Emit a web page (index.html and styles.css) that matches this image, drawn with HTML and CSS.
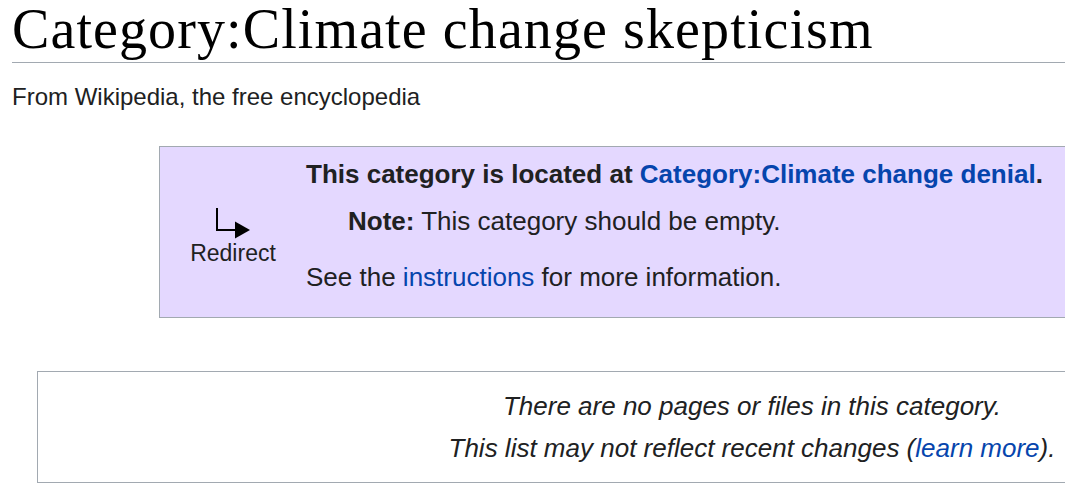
FILE: index.html
```html
<!DOCTYPE html>
<html lang="en">
<head>
<meta charset="utf-8">
<title>Category:Climate change skepticism</title>
<link rel="stylesheet" href="styles.css">
</head>
<body>
<div class="page">
  <h1 class="title">Category:Climate change skepticism</h1>
  <div class="site-sub">From Wikipedia, the free encyclopedia</div>
  <div class="cmbox">
    <div class="cmbox-image">
      <svg class="redirect-arrow" width="36" height="32" viewBox="0 0 36 32">
        <path d="M2 0 V22 H22" fill="none" stroke="#000" stroke-width="2"/>
        <path d="M20 13.5 L35 22 L20 30.5 Z" fill="#000"/>
      </svg>
      <div class="redirect-label">Redirect</div>
    </div>
    <div class="cmbox-text">
      <div class="line-main"><b>This category is located at <a href="#">Category:Climate change denial</a>.</b></div>
      <div class="line-note"><b>Note:</b> This category should be empty.</div>
      <div class="line-see">See the <a href="#">instructions</a> for more information.</div>
    </div>
  </div>
  <div class="catbox">
    <p class="empty-line">There are no pages or files in this category.</p>
    <p class="empty-line">This list may not reflect recent changes (<a href="#">learn more</a>).</p>
  </div>
</div>
</body>
</html>
```
FILE: styles.css
```css
html, body {
  margin: 0;
  padding: 0;
  overflow: hidden;
  background: #fff;
}
body {
  font-family: "Liberation Sans", Arial, sans-serif;
  color: #202122;
}
a {
  color: #0645ad;
  text-decoration: none;
}
.page {
  width: 1600px;
  padding-left: 12px;
}
.title {
  margin: 0;
  font-family: "Liberation Serif", "Times New Roman", serif;
  font-weight: normal;
  font-size: 56px;
  letter-spacing: 1.1px;
  line-height: 58px;
  padding-bottom: 4px;
  color: #000;
  border-bottom: 1px solid #a2a9b1;
}
.site-sub {
  margin-top: 20px;
  font-size: 24px;
  line-height: 28px;
  color: #202122;
}
.cmbox {
  margin-top: 35px;
  margin-left: 147px;
  width: 1200px;
  display: flex;
  align-items: center;
  background: #e4d8ff;
  border: 1px solid #a2a9b1;
  box-sizing: border-box;
}
.cmbox-image {
  width: 146px;
  display: flex;
  flex-direction: column;
  align-items: center;
  padding-top: 10px;
}
.redirect-arrow {
  display: block;
  margin-left: 0;
}
.redirect-label {
  font-size: 23px;
  line-height: 26px;
  color: #202122;
}
.cmbox-text {
  font-size: 26px;
  line-height: 30px;
  padding: 12px 0 25px;
}
.line-main {
  margin-bottom: 17px;
}
.line-note {
  padding-left: 42px;
  margin-bottom: 26px;
}
.catbox {
  margin-top: 53px;
  margin-left: 25px;
  width: 1430px;
  border: 1px solid #a2a9b1;
  box-sizing: border-box;
  padding: 19px 0 19px;
  text-align: center;
  font-style: italic;
  font-size: 26px;
  line-height: 30px;
}
.empty-line {
  margin: 0 0 12px;
}
.empty-line:last-child {
  margin-bottom: 0;
}
```
